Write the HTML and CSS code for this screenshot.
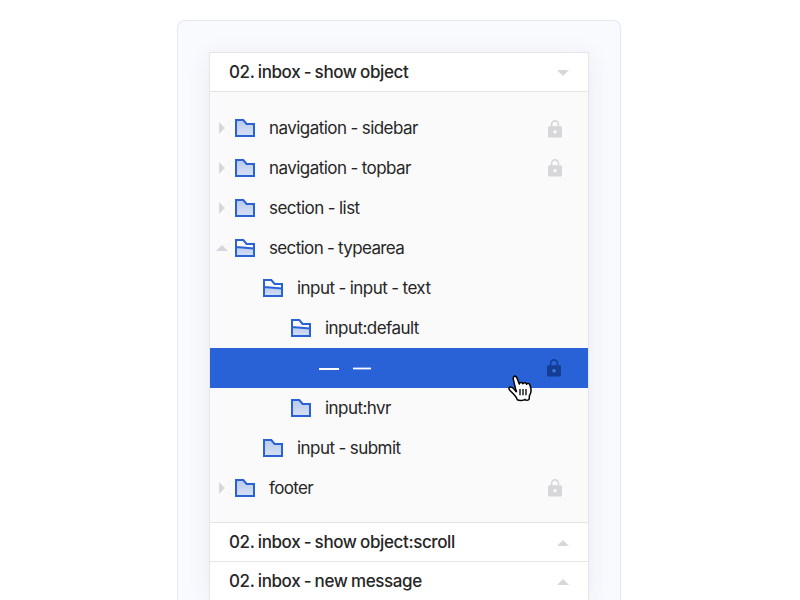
FILE: index.html
```html
<!DOCTYPE html>
<html lang="en">
<head>
<meta charset="utf-8">
<title>Layers</title>
<link rel="stylesheet" href="styles.css">
</head>
<body>
<svg class="defs" width="0" height="0" aria-hidden="true">
  <defs>
    <linearGradient id="fill" x1="0" y1="0" x2="0" y2="1">
      <stop offset="0" stop-color="#b9caee"/>
      <stop offset="1" stop-color="#d6dff4"/>
    </linearGradient>
    <symbol id="folder" viewBox="0 0 20 18">
      <path d="M1 1H8.3L11.6 5H19V17H1Z" fill="url(#fill)" stroke="#2962d6" stroke-width="2"/>
    </symbol>
    <symbol id="folder-open" viewBox="0 0 20 18">
      <path d="M1 8L19 9.6V17H1Z" fill="url(#fill)"/>
      <path d="M1 1H8.3L11.6 5H19V17H1ZM1 8L19 9.6" fill="none" stroke="#2962d6" stroke-width="2"/>
    </symbol>
    <symbol id="lock" viewBox="0 0 14 18">
      <path d="M3.6 7V4.3a3.4 3.4 0 0 1 6.8 0V7" fill="none" stroke="currentColor" stroke-width="1.6"/>
      <rect x="0" y="6.2" width="14" height="11.4" rx="1.4" fill="currentColor"/>
      <circle class="keyhole" cx="7" cy="11.8" r="1.8"/>
    </symbol>
  </defs>
</svg>
<main class="frame">
  <section class="panel">
    <header class="heading"><span class="title">02. inbox - show object</span><i class="caret down"></i></header>
    <ul class="tree">
      <li class="row"><i class="caret right"></i><svg class="folder"><use href="#folder"/></svg><span class="label">navigation - sidebar</span><svg class="lock"><use href="#lock"/></svg></li>
      <li class="row"><i class="caret right"></i><svg class="folder"><use href="#folder"/></svg><span class="label">navigation - topbar</span><svg class="lock raised"><use href="#lock"/></svg></li>
      <li class="row"><i class="caret right"></i><svg class="folder"><use href="#folder"/></svg><span class="label">section - list</span></li>
      <li class="row"><i class="caret up"></i><svg class="folder"><use href="#folder-open"/></svg><span class="label tight">section - typearea</span></li>
      <li class="row level1"><svg class="folder"><use href="#folder-open"/></svg><span class="label">input - input - text</span></li>
      <li class="row level2"><svg class="folder"><use href="#folder-open"/></svg><span class="label">input:default</span></li>
      <li class="row level3 selected"><i class="dash"></i><i class="dash thin"></i><svg class="lock"><use href="#lock"/></svg>
        <svg class="cursor" viewBox="0 0 25 27"><path d="M8.6 17.2L7 11.6 5.5 5.2C5 3 5.2 1.6 6.4 1.2 7.8.8 8.6 1.8 9.2 3.4L11.3 9C11.4 7.2 14.3 7 14.9 8.8 15.5 7.2 18 7.3 18.6 9.2 19.4 8 21.5 8.2 22 10.2L23 14C23.4 16.8 22.6 18.7 21.4 20.8L21.2 24C20.4 25.8 17.6 25.6 17 24.4 16 25.8 10.6 25.8 9.2 24.6 8.9 22.4 6.2 19.7 4.5 18L1.5 14.9C.6 13.8.9 12.4 2.2 12 3.5 11.6 4.9 12.5 6 14.1L8.6 17.2" fill="#fff" stroke="#000" stroke-width="1.5" stroke-linejoin="round"/><path d="M12 14V20.3M15 14V20.3M18 14V20.3" stroke="#000" stroke-width="1.3"/></svg></li>
      <li class="row level2"><svg class="folder"><use href="#folder"/></svg><span class="label">input:hvr</span></li>
      <li class="row level1"><svg class="folder"><use href="#folder"/></svg><span class="label">input - submit</span></li>
      <li class="row"><i class="caret right"></i><svg class="folder"><use href="#folder"/></svg><span class="label tight">footer</span><svg class="lock raised"><use href="#lock"/></svg></li>
    </ul>
    <header class="heading"><span class="title">02. inbox - show object:scroll</span><i class="caret up"></i></header>
    <header class="heading"><span class="title">02. inbox - new message</span><i class="caret up"></i></header>
  </section>
</main>
</body>
</html>
```
FILE: styles.css
```css
* { box-sizing: border-box; }
body {
  margin: 0;
  background: #fff;
  color: #262626;
  font: 17px/24px Inter, "Liberation Sans", sans-serif;
}
.defs { display: block; }
.frame {
  width: 444px;
  height: 580px;
  margin: 20px 0 0 177px;
  padding: 31px 31px 0;
  background: #f9fafe;
  border: 1px solid #e4e8f4;
  border-bottom: 0;
  border-radius: 8px 8px 0 0;
  overflow: hidden;
}
.panel {
  width: 380px;
  height: 548px;
  border: 1px solid #e4e5e9;
  border-bottom: 0;
  background: #fff;
  box-shadow: 0 4px 24px rgba(40, 50, 90, .07);
}
.heading {
  display: flex;
  align-items: center;
  justify-content: space-between;
  height: 39px;
  padding: 0 19px;
  border-bottom: 1px solid #e4e5e7;
}
.heading:last-child { border-bottom-color: transparent; height: 38px; padding-top: 1px; }
.title { font-weight: 500; letter-spacing: -.38px; word-spacing: -.7px; white-space: nowrap; }
.tree {
  list-style: none;
  margin: 0;
  padding: 16px 0 14px;
  height: 431px;
  background: #fafafa;
  border-bottom: 1px solid #e4e5e7;
}
.row { display: flex; align-items: center; height: 40px; padding: 0 26px 0 25px; position: relative; }
.level1 { padding-left: 53px; }
.level2 { padding-left: 81px; }
.level3 { padding-left: 109px; }
.selected { background: #2962d6; color: #fff; }
.folder { width: 20px; height: 18px; flex: none; }
.label { margin-left: 14px; letter-spacing: -.55px; word-spacing: -.2px; white-space: nowrap; }
.label.tight { letter-spacing: -.64px; }
.caret { flex: none; width: 12px; height: 6px; background: #d6d7db; }
.down { clip-path: polygon(0 0, 100% 0, 50% 100%); margin-top: 2px; }
.up { clip-path: polygon(0 100%, 100% 100%, 50% 0); margin-top: 2px; }
.right { width: 6px; height: 12px; clip-path: polygon(0 0, 100% 50%, 0 100%); }
.row .right { margin: 0 10px 0 -16px; }
.row .up { margin: 0 7px 0 -19px; }
.lock { width: 14px; height: 18px; margin: 1px 0 0 auto; color: #d6d7db; flex: none; }
.lock.raised { margin-top: 0; }
.selected .lock { color: #143d93; margin: 0 1px 0 auto; --hole: #3f78e8; }
.keyhole { fill: var(--hole, #fafafa); }
.dash { width: 20px; height: 2px; margin-top: 2px; background: #fff; }
.thin { width: 18px; height: 1px; margin: 0 0 0 14px; background: #fff; box-shadow: 0 1px #7b9fe6, 0 -1px #7b9fe6; }
.cursor { position: absolute; left: 297.5px; top: 27px; width: 25px; height: 27px; z-index: 1; }
```
